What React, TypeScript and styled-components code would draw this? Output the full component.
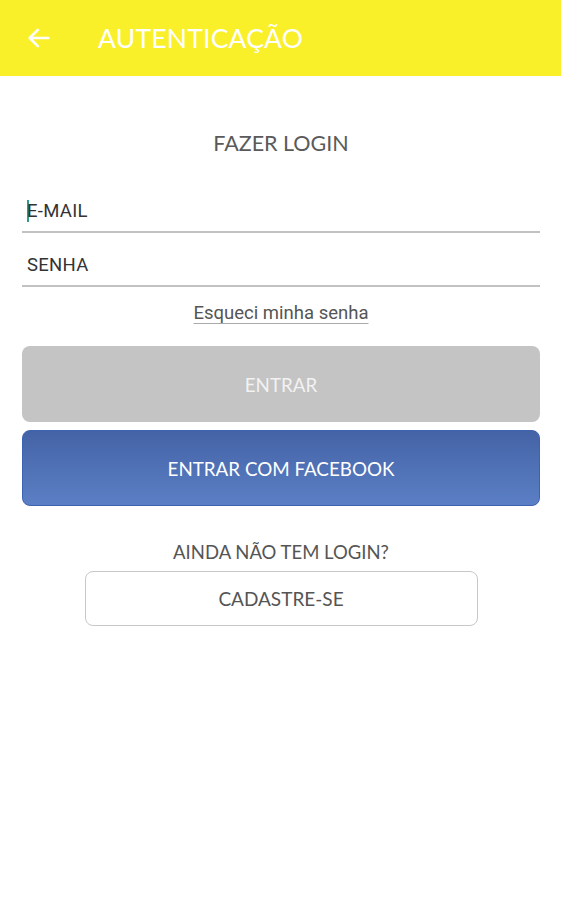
import styled, { createGlobalStyle } from "styled-components";

const GlobalStyle = createGlobalStyle`
  html, body {
    margin: 0;
    padding: 0;
    background: #ffffff;
  }
  body {
    font-family: "Lato", "Open Sans", sans-serif;
  }
`;

const Screen = styled.div`
  display: flex;
  flex-direction: column;
  width: 561px;
  min-height: 900px;
  background: #ffffff;
`;

const Toolbar = styled.header`
  display: flex;
  align-items: center;
  height: 76px;
  padding: 0 0 0 24px;
  background: #faf02a;
  box-sizing: border-box;

  h1 {
    margin: 0 0 0 44px;
    font-family: "Lato", sans-serif;
    font-size: 26.5px;
    font-weight: 400;
    color: #ffffff;
    letter-spacing: 0.2px;
  }
`;

const BackButton = styled.button`
  display: flex;
  align-items: center;
  justify-content: center;
  width: 30px;
  height: 30px;
  padding: 0;
  border: none;
  background: transparent;
`;

const Form = styled.main`
  display: flex;
  flex-direction: column;
  align-items: center;
  padding: 55px 21px 0 22px;
`;

const Title = styled.h2`
  margin: 0;
  font-family: "Lato", sans-serif;
  font-size: 21.5px;
  font-weight: 400;
  color: #5a5a5a;
  line-height: 24px;
`;

const Field = styled.label<{ $first?: boolean }>`
  display: flex;
  align-items: center;
  width: 100%;
  height: 42px;
  margin-top: ${(p) => (p.$first ? "36px" : "12px")};
  padding-left: 5px;
  box-sizing: border-box;
  border-bottom: 2px solid #c2c2c2;
  font-family: "Roboto", sans-serif;
  font-size: 18.5px;
  color: #333333;
  letter-spacing: 0.3px;
`;

const Caret = styled.span`
  display: inline-block;
  width: 2px;
  height: 22px;
  margin-right: -2px;
  background: #2a9d84;
`;

const ForgotLink = styled.a`
  margin-top: 15px;
  font-family: "Roboto", sans-serif;
  font-size: 18.5px;
  color: #555555;
  text-decoration: underline;
  text-decoration-color: #aaaaaa;
  text-underline-offset: 4px;
`;

const WideButton = styled.button<{ $variant: "disabled" | "facebook" }>`
  display: flex;
  align-items: center;
  justify-content: center;
  width: 100%;
  height: 76px;
  border-radius: 8px;
  font-family: "Lato", sans-serif;
  font-size: 18.8px;
  font-weight: 400;
  box-sizing: border-box;
  margin-top: ${(p) => (p.$variant === "disabled" ? "22px" : "8px")};
  color: ${(p) => (p.$variant === "disabled" ? "#f2f2f2" : "#ffffff")};
  background: ${(p) =>
    p.$variant === "disabled"
      ? "#c4c4c4"
      : "linear-gradient(to bottom, #4463a6, #5b7fc5)"};
  border: ${(p) =>
    p.$variant === "disabled" ? "none" : "1px solid #3c62b0"};
`;

const Prompt = styled.p`
  margin: 35px 0 0;
  font-family: "Lato", sans-serif;
  font-size: 18.5px;
  color: #555555;
  line-height: 22px;
`;

const OutlineButton = styled.button`
  display: flex;
  align-items: center;
  justify-content: center;
  width: 393px;
  height: 55px;
  margin-top: 8px;
  background: #ffffff;
  border: 1px solid #c8c8c8;
  border-radius: 8px;
  font-family: "Lato", sans-serif;
  font-size: 19px;
  color: #555555;
`;

export default function App() {
  return (
    <>
      <GlobalStyle />
      <Screen>
        <Toolbar>
          <BackButton aria-label="voltar">
            <svg width="28" height="28" viewBox="0 0 24 24" fill="none">
              <path
                d="M20 12H4.5M11 5l-7 7 7 7"
                stroke="#ffffff"
                strokeWidth="2.2"
                strokeLinecap="round"
                strokeLinejoin="round"
              />
            </svg>
          </BackButton>
          <h1>AUTENTICAÇÃO</h1>
        </Toolbar>
        <Form>
          <Title>FAZER LOGIN</Title>
          <Field $first>
            <Caret />
            E-MAIL
          </Field>
          <Field>SENHA</Field>
          <ForgotLink>Esqueci minha senha</ForgotLink>
          <WideButton $variant="disabled">ENTRAR</WideButton>
          <WideButton $variant="facebook">ENTRAR COM FACEBOOK</WideButton>
          <Prompt>AINDA NÃO TEM LOGIN?</Prompt>
          <OutlineButton>CADASTRE-SE</OutlineButton>
        </Form>
      </Screen>
    </>
  );
}
